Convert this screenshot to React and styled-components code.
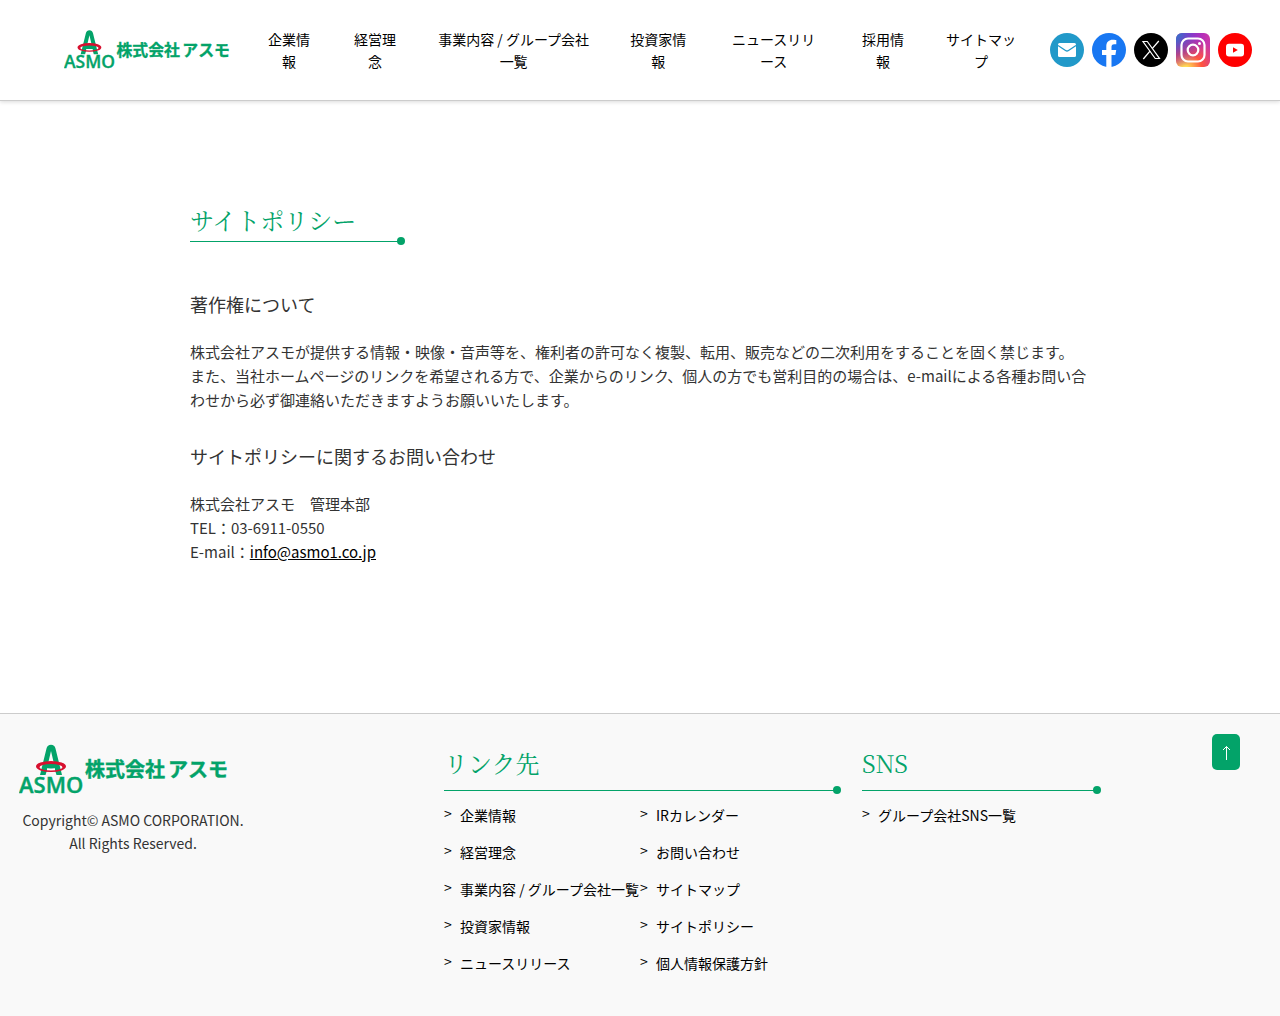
import React from 'react'
import styled, { createGlobalStyle } from 'styled-components';

const navItems = ['企業情報', '経営理念', '事業内容 / グループ会社一覧', '投資家情報', 'ニュースリリース', '採用情報', 'サイトマップ'];

const linkItems = [
  '企業情報', 'IRカレンダー',
  '経営理念', 'お問い合わせ',
  '事業内容 / グループ会社一覧', 'サイトマップ',
  '投資家情報', 'サイトポリシー',
  'ニュースリリース', '個人情報保護方針',
];

const Logo = ({ width }) => {
  return (
    <LogoSvg width={width} viewBox="0 -2 214 58" role="img" aria-label="株式会社アスモ">
      <path d="M21 31 L27.500 4.500 Q28.500 0.800 32 0.800 Q35.500 0.800 36.500 4.500 L43 31 H37.500 L35.500 24.500 H28.500 L26.500 31 Z M29.200 19 H34.800 L32 7 Z" fill="#03a369" fillRule="evenodd" />
      <path d="M28 24.300 Q32 25.500 36 24.300 V26.500 H28 Z" fill="#fff" />
      <path d="M17 22.500 a15 5.500 0 1 1 30 0 a15 5.500 0 1 1 -30 0 Z M20.500 23.200 a11.500 3.200 0 1 0 23 0 a11.500 3.200 0 1 0 -23 0 Z" fill="#d7102f" fillRule="evenodd" />
      <text x="0" y="49" className="roman">ASMO</text>
      <text x="66" y="33" className="kanji">株式会社</text>
      <text x="149" y="33" className="kanji">アスモ</text>
    </LogoSvg>
  )
}

const MailIcon = () => (
  <svg viewBox="0 0 34 34">
    <circle cx="17" cy="17" r="17" fill="#2199c9" />
    <rect x="8" y="10" width="18" height="14" rx="1.500" fill="#fff" />
    <path d="M8 12.500 L15.500 17.500 Q17 18.500 18.500 17.500 L26 12.500" fill="none" stroke="#2199c9" strokeWidth="1.300" />
  </svg>
)

const FacebookIcon = () => (
  <svg viewBox="0 0 34 34">
    <circle cx="17" cy="17" r="17" fill="#1877f2" />
    <path d="M14.300 34 V22 H10 V17 H14.300 V13.300 C14.300 9 16.900 6.700 20.800 6.700 C22.600 6.700 24.300 7 24.300 7 V11.200 H22.200 C20.100 11.200 19.500 12.500 19.500 13.800 V17 H24.200 L23.400 22 H19.500 V34 Z" fill="#fff" />
  </svg>
)

const XIcon = () => (
  <svg viewBox="0 0 34 34">
    <circle cx="17" cy="17" r="17" />
    <path d="M9 8.500 H13.300 L25.500 25.500 H21.200 Z" fill="none" stroke="#fff" strokeWidth="1.200" />
    <path d="M24.800 8 L18.200 15.600 M16 18.200 L9.300 26" stroke="#fff" strokeWidth="1.300" />
  </svg>
)

const InstagramIcon = () => (
  <svg viewBox="0 0 34 34">
    <defs>
      <radialGradient id="igWarm" cx="0.27" cy="1.080" r="1">
        <stop offset="0" stopColor="#fd5" />
        <stop offset="0.1" stopColor="#fd5" />
        <stop offset="0.5" stopColor="#ff543e" />
        <stop offset="1" stopColor="#c837ab" />
      </radialGradient>
      <radialGradient id="igCool" cx="-0.1" cy="0" r="1.050">
        <stop offset="0" stopColor="#3771c8" />
        <stop offset="0.15" stopColor="#3771c8" />
        <stop offset="1" stopColor="#60f" stopOpacity="0" />
      </radialGradient>
    </defs>
    <rect width="34" height="34" rx="6" fill="url(#igWarm)" />
    <rect width="34" height="34" rx="6" fill="url(#igCool)" />
    <rect x="5.500" y="5.500" width="23" height="23" rx="6.500" fill="none" stroke="#fff" strokeWidth="2.200" />
    <circle cx="17" cy="17" r="5.300" fill="none" stroke="#fff" strokeWidth="2.200" />
    <circle cx="23.500" cy="10.500" r="1.500" fill="#fff" />
  </svg>
)

const YoutubeIcon = () => (
  <svg viewBox="0 0 34 34">
    <circle cx="17" cy="17" r="17" fill="#f00" />
    <rect x="8" y="10.800" width="18" height="12.600" rx="3" fill="#fff" />
    <path d="M15 14.300 L19.800 17 L15 19.700 Z" fill="#f00" />
  </svg>
)

const socials = [
  { name: 'メール', Icon: MailIcon },
  { name: 'Facebook', Icon: FacebookIcon },
  { name: 'X', Icon: XIcon },
  { name: 'Instagram', Icon: InstagramIcon },
  { name: 'YouTube', Icon: YoutubeIcon },
];

export default function App() {
  return (
    <>
      <GlobalStyle />
      <Header>
        <HeaderLogo href="#"><Logo width={170} /></HeaderLogo>
        <Nav>
          <NavList>
            {navItems.map((name) => <li key={name}><a href="#">{name}</a></li>)}
          </NavList>
        </Nav>
        <SocialList>
          {socials.map(({ name, Icon }) => (
            <li key={name}><a href="#" aria-label={name}><Icon /></a></li>
          ))}
        </SocialList>
      </Header>

      <Main>
        <PageTitle>サイトポリシー</PageTitle>
        <Section>
          <h2>著作権について</h2>
          <p>
            株式会社アスモが提供する情報・映像・音声等を、権利者の許可なく複製、転用、販売などの二次利用をすることを固く禁じます。<br />
            また、当社ホームページのリンクを希望される方で、企業からのリンク、個人の方でも営利目的の場合は、e-mailによる各種お問い合わせから必ず御連絡いただきますようお願いいたします。
          </p>
        </Section>
        <Section>
          <h2>サイトポリシーに関するお問い合わせ</h2>
          <p>
            株式会社アスモ　管理本部<br />
            TEL：03-6911-0550<br />
            E-mail：<a href="mailto:info@asmo1.co.jp">info@asmo1.co.jp</a>
          </p>
        </Section>
      </Main>

      <Footer>
        <FooterBrand>
          <a href="#"><Logo width={214} /></a>
          <small>Copyright© ASMO CORPORATION.<br />All Rights Reserved.</small>
        </FooterBrand>
        <FooterBlock>
          <FooterTitle>リンク先</FooterTitle>
          <LinkList $columns={2}>
            {linkItems.map((name) => <li key={name}><a href="#">{name}</a></li>)}
          </LinkList>
        </FooterBlock>
        <FooterBlock>
          <FooterTitle>SNS</FooterTitle>
          <LinkList $columns={1}>
            <li><a href="#">グループ会社SNS一覧</a></li>
          </LinkList>
        </FooterBlock>
        <TopButton type="button" aria-label="ページの先頭へ" onClick={() => window.scrollTo(0, 0)}>
          <svg width="8" height="16" viewBox="0 0 8 16"><path d="M4.500 16 V2.500 M1 6 L4.500 2.500 L8 6" /></svg>
        </TopButton>
      </Footer>
    </>
  )
}

const GlobalStyle = createGlobalStyle`
  * {
    box-sizing: border-box;
  }
  body {
    margin: 0;
    background-color: #fff;
    color: #333;
    font-family: 'Noto Sans CJK JP', sans-serif;
    font-size: 15px;
    line-height: 24px;
  }
  ul, p, h1, h2 {
    margin: 0;
    padding: 0;
    font-weight: 400;
  }
  ul {
    list-style: none;
  }
  a {
    color: #000;
    text-decoration: none;
  }
`
const LogoSvg = styled.svg`
  display: block;
  text {
    fill: #03a369;
  }
  .roman {
    font: 600 22px 'Open Sans', sans-serif;
    stroke: #03a369;
    stroke-width: 0.4px;
  }
  .kanji {
    font: 700 20px 'Noto Sans CJK JP', sans-serif;
    stroke: #03a369;
    stroke-width: 0.4px;
  }
`
const Header = styled.header`
  display: flex;
  align-items: center;
  height: 101px;
  padding: 0 28px 0 64px;
  border-bottom: 1px solid #ccc;
  box-shadow: 0 1px 4px rgba(0, 0, 0, 0.15);
`
const HeaderLogo = styled.a`
  flex: none;
  width: 182px;
  padding-top: 3px;
`
const Nav = styled.nav`
  flex: 1;
  min-width: 0;
`
const NavList = styled.ul`
  display: flex;
  li {
    padding: 0 19px;
    font-size: 14px;
    line-height: 22px;
    text-align: center;
  }
`
const SocialList = styled.ul`
  display: flex;
  flex: none;
  gap: 8px;
  margin-left: 14px;
  svg {
    display: block;
    width: 34px;
    height: 34px;
  }
`
const Main = styled.main`
  max-width: 900px;
  margin: 0 auto;
  padding: 104px 0 149px;
`
const RuledTitle = styled.h2`
  position: relative;
  border-bottom: 1px solid #03a369;
  color: #03a369;
  font-family: 'Noto Serif CJK JP', 'Noto Serif JP', serif;
  font-size: 24px;
  &::after {
    content: '';
    position: absolute;
    right: -4px;
    bottom: -4px;
    width: 8px;
    height: 8px;
    border-radius: 50%;
    background-color: #03a369;
  }
`
const PageTitle = styled(RuledTitle).attrs({ as: 'h1' })`
  width: 211px;
  padding-bottom: 6px;
  line-height: 30px;
`
const Section = styled.section`
  margin-top: 47px;
  h2 {
    margin-bottom: 21px;
    font-size: 18px;
    line-height: 30px;
  }
  & + & {
    margin-top: 29px;
  }
  p a {
    text-decoration: underline;
  }
`
const Footer = styled.footer`
  display: grid;
  grid-template-columns: 404fr 397fr 239fr 118fr;
  column-gap: 21px;
  align-items: start;
  padding: 20px 40px 35px 19px;
  border-top: 1px solid #ccc;
  background-color: #f9f9f9;
`
const FooterBrand = styled.div`
  justify-self: start;
  min-width: 228px;
  padding-top: 8px;
  small {
    display: block;
    margin-top: 9px;
    font-size: 14px;
    line-height: 23px;
    text-align: center;
  }
`
const FooterBlock = styled.div`
  padding-top: 12px;
`
const FooterTitle = styled(RuledTitle)`
  margin-right: 4px;
  padding-bottom: 11px;
  line-height: 33px;
`
const LinkList = styled.ul`
  display: grid;
  grid-template-columns: repeat(${props => props.$columns}, 1fr);
  margin-right: 5px;
  padding-top: 5px;
  li {
    display: flex;
    height: 37px;
    align-items: center;
    font-size: 14px;
    white-space: nowrap;
  }
  li::before {
    content: '>';
    width: 16px;
    padding-bottom: 3px;
    color: #000;
  }
`
const TopButton = styled.button`
  display: flex;
  justify-content: center;
  align-items: center;
  justify-self: end;
  width: 28px;
  height: 36px;
  padding: 0;
  border: none;
  border-radius: 5px;
  background-color: #03a369;
  cursor: pointer;
  path {
    fill: none;
    stroke: #fff;
  }
`
